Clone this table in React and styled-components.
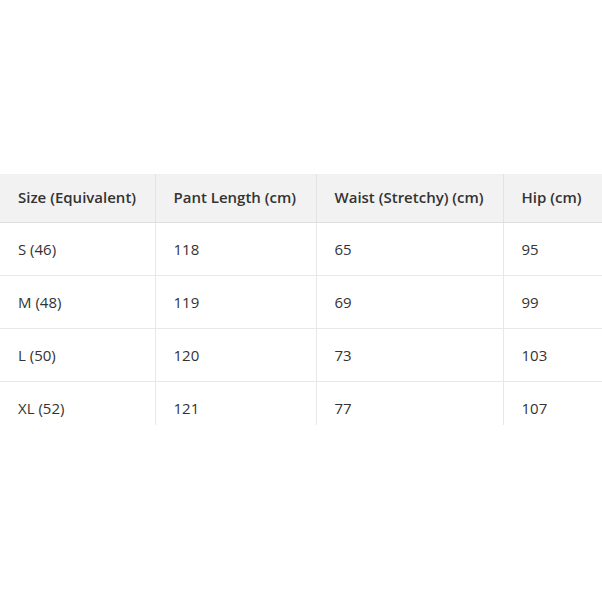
import React from 'react';
import styled, { createGlobalStyle } from 'styled-components';

const GlobalStyle = createGlobalStyle`
    html, body {
        margin: 0;
        padding: 0;
        background: #fff;
    }
`;

const Page = styled.div`
    width: 602px;
    height: 602px;
    padding-top: 174px;
    box-sizing: border-box;
    overflow: hidden;
`;

const Frame = styled.div`
    width: 602px;
    height: 251px;
    overflow: hidden;
`;

const Table = styled.table`
    width: 720px;
    table-layout: fixed;
    border-collapse: collapse;
    font-family: "Open Sans", "Noto Sans", sans-serif;
    font-size: 15px;
    color: #333;
`;

const Th = styled.th`
    width: ${p => p.w}px;
    height: 48px;
    padding: 0 0 2px 18px;
    box-sizing: border-box;
    text-align: left;
    font-weight: 600;
    background: #f2f2f2;
    border-right: 1px solid #e3e3e3;
    border-bottom: 1px solid #dedede;
    white-space: nowrap;
`;

const Td = styled.td`
    height: 53px;
    padding: 0 0 0 18px;
    box-sizing: border-box;
    border-right: 1px solid #e8e8e8;
    border-bottom: 1px solid #e8e8e8;
    white-space: nowrap;
`;

const columns = [
    { label: 'Size (Equivalent)', w: 155 },
    { label: 'Pant Length (cm)', w: 161 },
    { label: 'Waist (Stretchy) (cm)', w: 187 },
    { label: 'Hip (cm)', w: 217 },
];

const rows = [
    ['S (46)', '118', '65', '95'],
    ['M (48)', '119', '69', '99'],
    ['L (50)', '120', '73', '103'],
    ['XL (52)', '121', '77', '107'],
];

const App = () => {
    return (
        <>
            <GlobalStyle />
            <Page>
                <Frame>
                    <Table>
                        <thead>
                            <tr>
                                {columns.map(c => (
                                    <Th key={c.label} w={c.w}>{c.label}</Th>
                                ))}
                            </tr>
                        </thead>
                        <tbody>
                            {rows.map(r => (
                                <tr key={r[0]}>
                                    {r.map((v, i) => <Td key={i}>{v}</Td>)}
                                </tr>
                            ))}
                        </tbody>
                    </Table>
                </Frame>
            </Page>
        </>
    )
}

export default App
